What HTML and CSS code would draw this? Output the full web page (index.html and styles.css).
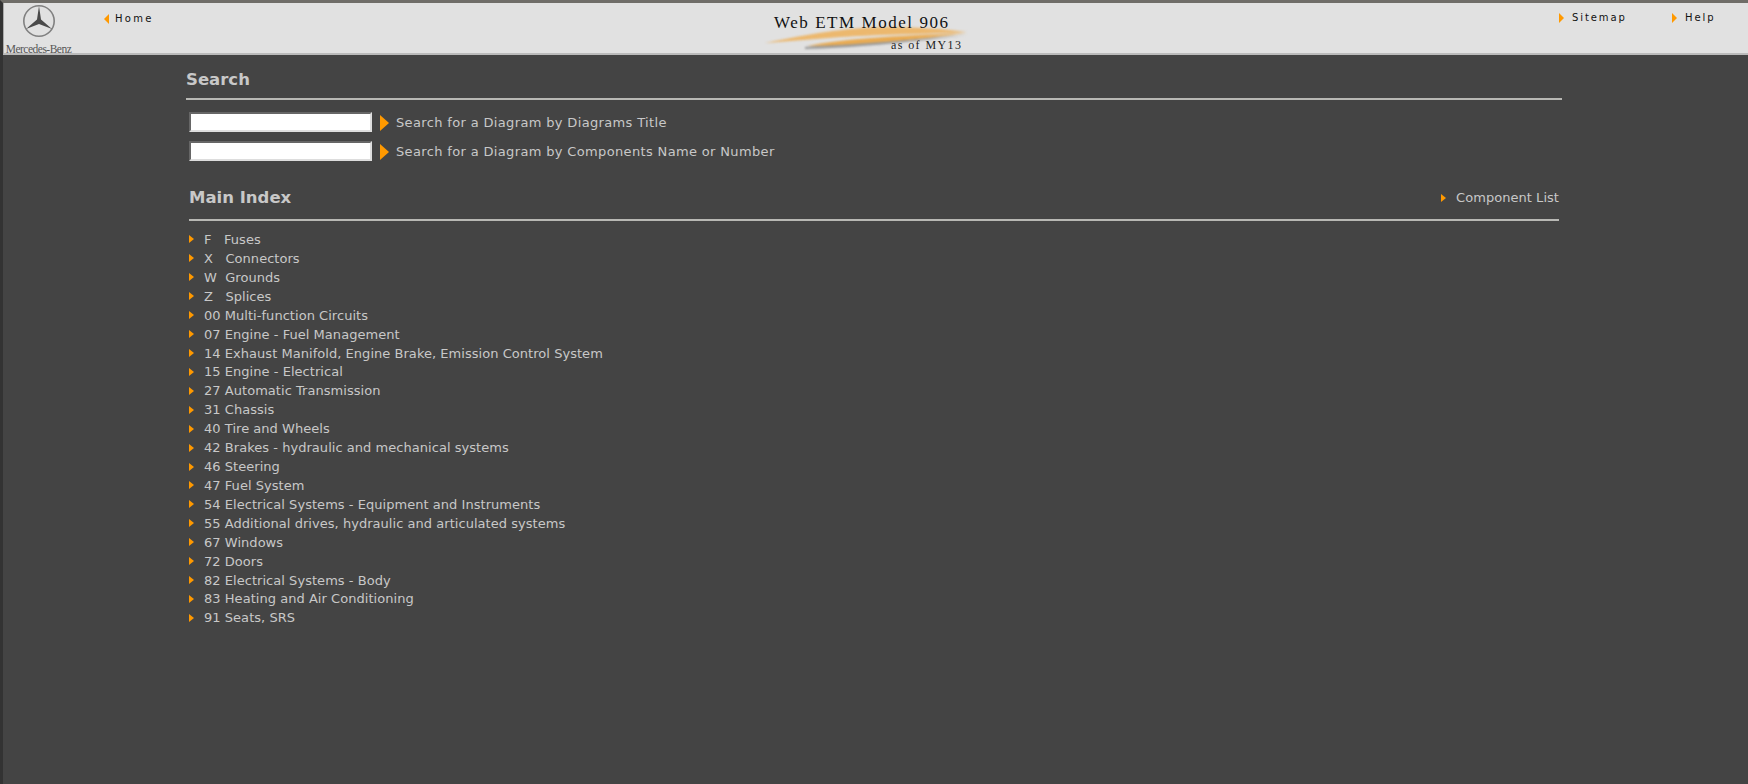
FILE: index.html
```html
<!DOCTYPE html>
<html lang="en">
<head>
<meta charset="utf-8">
<title>Web ETM Model 906</title>
<link rel="stylesheet" href="styles.css">
</head>
<body>
<div class="frame">
  <header class="topbar">
    <div class="brand">
      <svg class="star" width="34" height="34" viewBox="0 0 34 34">
        <circle cx="17" cy="17" r="15.2" fill="none" stroke="#808080" stroke-width="1.6"/>
        <path d="M17 2 L19 15.5 L30 25 L17 20 L4 25 L15 15.5 Z" fill="#4a4a4a"/>
      </svg>
      <span class="brand-name">Mercedes-Benz</span>
    </div>
    <a class="nav-link home"><i class="tri-left"></i>Home</a>
    <div class="title-block">
      <svg class="swoosh" width="210" height="34" viewBox="0 0 210 34">
        <path d="M44 29 C90 25 150 22 206 17 C140 25 90 30 44 31 Z" fill="#999"/>
        <path d="M4 25 C50 16 80 10 125 9 C150 9 185 11 206 14 C165 16 110 17 80 19 C55 21 30 23 4 25 Z" fill="#ecb86e"/>
        <path d="M46 28 C80 21 130 18 206 15 C160 21 100 27 46 28 Z" fill="#e9ab52"/>
      </svg>
      <div class="title">Web ETM Model 906</div>
      <div class="subtitle">as of MY13</div>
    </div>
    <a class="nav-link sitemap"><i class="tri-right"></i>Sitemap</a>
    <a class="nav-link help"><i class="tri-right"></i>Help</a>
  </header>
  <main class="content">
    <h2 class="search-head">Search</h2>
    <div class="search-row"><input class="search-input" type="text"><i class="tri-big"></i><span>Search for a Diagram by Diagrams Title</span></div>
    <div class="search-row"><input class="search-input" type="text"><i class="tri-big"></i><span>Search for a Diagram by Components Name or Number</span></div>
    <div class="index-head">
      <h2>Main Index</h2>
      <a class="item component"><i class="tri-small"></i>Component List</a>
    </div>
    <ul class="index">
      <li><i class="tri-small"></i>F&nbsp;&nbsp;&nbsp;Fuses</li>
      <li><i class="tri-small"></i>X&nbsp;&nbsp;&nbsp;Connectors</li>
      <li><i class="tri-small"></i>W&nbsp;&nbsp;Grounds</li>
      <li><i class="tri-small"></i>Z&nbsp;&nbsp;&nbsp;Splices</li>
      <li><i class="tri-small"></i>00 Multi-function Circuits</li>
      <li><i class="tri-small"></i>07 Engine - Fuel Management</li>
      <li><i class="tri-small"></i>14 Exhaust Manifold, Engine Brake, Emission Control System</li>
      <li><i class="tri-small"></i>15 Engine - Electrical</li>
      <li><i class="tri-small"></i>27 Automatic Transmission</li>
      <li><i class="tri-small"></i>31 Chassis</li>
      <li><i class="tri-small"></i>40 Tire and Wheels</li>
      <li><i class="tri-small"></i>42 Brakes - hydraulic and mechanical systems</li>
      <li><i class="tri-small"></i>46 Steering</li>
      <li><i class="tri-small"></i>47 Fuel System</li>
      <li><i class="tri-small"></i>54 Electrical Systems - Equipment and Instruments</li>
      <li><i class="tri-small"></i>55 Additional drives, hydraulic and articulated systems</li>
      <li><i class="tri-small"></i>67 Windows</li>
      <li><i class="tri-small"></i>72 Doors</li>
      <li><i class="tri-small"></i>82 Electrical Systems - Body</li>
      <li><i class="tri-small"></i>83 Heating and Air Conditioning</li>
      <li><i class="tri-small"></i>91 Seats, SRS</li>
    </ul>
  </main>
</div>
</body>
</html>
```
FILE: styles.css
```css
html, body { margin: 0; height: 100%; overflow: hidden; background: #444; }
.frame {
  height: 784px; box-sizing: border-box;
  border-top: 3px solid #6f6d68; border-left: 3px solid #333;
  background: #444; color: #c8c8c8;
  font-family: "DejaVu Sans", Verdana, sans-serif; font-size: 13px; letter-spacing: 0.04px;
}
.topbar {
  position: relative; height: 52px; box-sizing: border-box;
  background: #e1e1e1; border-bottom: 2px solid #bbb;
  border-left: 1px solid #aaa;
}
.brand { position: absolute; left: 0; top: 0; width: 69px; display: flex; flex-direction: column; align-items: center; }
.star { margin-top: 1px; }
.brand-name { font-family: "Liberation Serif", serif; font-size: 11.5px; letter-spacing: -0.5px; color: #555; margin-top: 5px; white-space: nowrap; }
.nav-link { position: absolute; top: 9px; font-family: "DejaVu Sans", sans-serif; font-size: 10px; letter-spacing: 1.9px; color: #111; white-space: nowrap; display: flex; align-items: center; }
.home { left: 100px; top: 10px; letter-spacing: 2.3px; }
.home .tri-left { margin-right: 6px; }
.sitemap { left: 1555px; }
.help { left: 1668px; }
.tri-left, .tri-right { display: block; width: 0; height: 0; border-top: 5px solid transparent; border-bottom: 5px solid transparent; margin-right: 8px; }
.tri-left { border-right: 5px solid #f90; }
.tri-right { border-left: 5px solid #f90; }
.title-block { position: absolute; left: 757px; top: 0; width: 210px; height: 49px; }
.swoosh { position: absolute; left: 0; top: 15px; filter: blur(0.8px); }
.title { position: absolute; left: 13px; top: 10px; font-family: "Liberation Serif", serif; font-size: 17px; letter-spacing: 1.55px; color: #111; white-space: nowrap; }
.subtitle { position: absolute; left: 130px; top: 35px; font-family: "Liberation Serif", serif; font-size: 12px; letter-spacing: 1.4px; color: #222; white-space: nowrap; }
.content { width: 1376px; margin-left: 183px; padding-top: 18px; }
.search-head {
  margin: 0 0 8px; height: 27px; box-sizing: border-box; font-size: 16.5px; line-height: 13px; font-weight: bold; color: #c8c8c8; letter-spacing: 0;
  border-bottom: 2px solid #b8b8b4;
}
.search-row { display: flex; align-items: center; height: 29px; padding-left: 3px; letter-spacing: 0.35px; }
.search-input { width: 183px; height: 20px; box-sizing: border-box; margin: -2px 8px 0 0; padding: 0; background: #fff; border: 2px solid; border-color: #666 #ddd #ddd #666; }
.tri-big { display: block; width: 0; height: 0; border-top: 8px solid transparent; border-bottom: 8px solid transparent; border-left: 9px solid #f90; margin-right: 7px; }
.index-head {
  display: flex; justify-content: space-between; align-items: center;
  margin: 13px 3px 0; height: 42px; padding-bottom: 3px; box-sizing: border-box;
  border-bottom: 2px solid #b8b8b4;
}
.index-head h2 { margin: 0; font-size: 16.5px; font-weight: bold; color: #c8c8c8; letter-spacing: 0; }
.item { display: flex; align-items: center; }
.component .tri-small { margin-right: 10px; }
.tri-small { display: inline-block; width: 0; height: 0; border-top: 4px solid transparent; border-bottom: 4px solid transparent; border-left: 5px solid #f90; margin-right: 10px; }
.index { list-style: none; margin: 9px 0 0 3px; padding: 0; }
.index li { height: 18.93px; line-height: 19px; white-space: pre; display: flex; align-items: center; }
```
